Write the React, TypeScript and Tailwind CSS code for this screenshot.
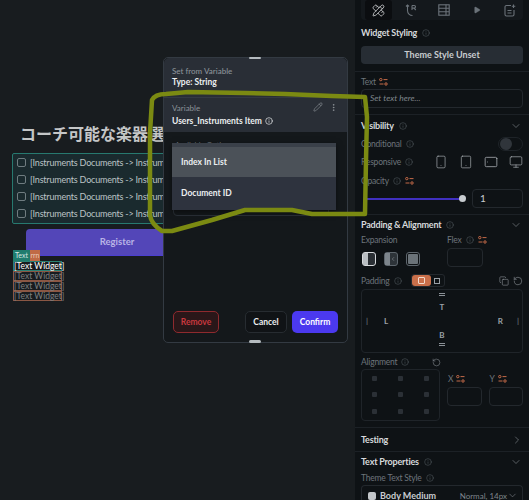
import { ChevronDown, ChevronLeft, ChevronRight, Copy, EllipsisVertical, Info, Monitor, PencilRuler, Pencil, Play, RotateCcw, Smartphone, Tablet } from "lucide-react";

const font = { fontFamily: "Lato, sans-serif" };

function VarIcon() {
  return (
    <svg width="9" height="8" viewBox="0 0 9 8" fill="none" stroke="#c46a48" strokeWidth="1" className="shrink-0">
      <circle cx="1.8" cy="1.6" r="1.2" />
      <path d="M4.5 1.6h4" />
      <path d="M0.5 6h4" />
      <circle cx="7" cy="6" r="1.2" />
    </svg>
  );
}

function LogicIcon() {
  return (
    <svg width="13" height="13" viewBox="0 0 13 13" fill="none" stroke="currentColor" strokeWidth="1.1">
      <path d="M1 2.5l1.5-1.5 1.5 1.5" />
      <path d="M2.5 1v5.5a5 5 0 0 0 5 5" />
      <path d="M7 1.5v4.5M7 1.5h2.2a1.3 1.3 0 0 1 0 2.6H7M9 4.2l1.8 1.8" />
    </svg>
  );
}

function TableIcon() {
  return (
    <svg width="12" height="12" viewBox="0 0 12 12" fill="none" stroke="currentColor" strokeWidth="1.1">
      <rect x="0.8" y="0.8" width="10.4" height="10.4" />
      <path d="M0.8 4.2h10.4M0.8 7.8h10.4M8 0.8v10.4" />
    </svg>
  );
}

function AddNoteIcon() {
  return (
    <svg width="12" height="13" viewBox="0 0 12 13" fill="none" stroke="currentColor" strokeWidth="1.1">
      <path d="M7 1.5H2.5a1.5 1.5 0 0 0-1.5 1.5v7.5A1.5 1.5 0 0 0 2.5 12h6a1.5 1.5 0 0 0 1.5-1.5V6" />
      <path d="M3.5 6.5h4M3.5 9h4" />
      <path d="M9.5 0.5v3.5M7.8 2.2h3.5" />
    </svg>
  );
}

function Tip() {
  return <Info size={8} strokeWidth={1.4} className="text-[#5f676e] shrink-0" />;
}

function Label({ children }: { children: React.ReactNode }) {
  return <div className="text-[8.5px] leading-[12px] tracking-[-0.2px] text-[#6d747b]">{children}</div>;
}

function Heading({ children }: { children: React.ReactNode }) {
  return <div className="text-[9px] leading-[12px] tracking-[-0.2px] font-bold text-[#d6d9dc]">{children}</div>;
}

function Divider() {
  return <div className="h-px bg-[#1c2126]" />;
}

function SectionHead({ title }: { title: string }) {
  return (
    <div className="flex items-center justify-between pr-[1px]">
      <div className="flex items-center gap-[5px]">
        <Heading>{title}</Heading>
        <Tip />
      </div>
      <ChevronDown size={12} strokeWidth={1.2} className="text-[#8a9096]" />
    </div>
  );
}

function CheckRow() {
  return (
    <div className="flex items-center h-[17px] gap-[4px]">
      <div className="w-[9px] h-[9px] ml-[4px] shrink-0 rounded-[2px] border border-[#6f7c80]" />
      <span className="text-[9px] tracking-[-0.2px] whitespace-nowrap text-[#bcc3c5]">[Instruments Documents -&gt; Instruments Name]</span>
    </div>
  );
}

function WidgetRow({ active }: { active?: boolean }) {
  return (
    <div className={active ? "h-[10px] border border-[#2a8073] text-[8.5px] leading-[8px] whitespace-nowrap text-white" : "h-[10px] border border-[#8a5744] text-[8.5px] leading-[8px] whitespace-nowrap text-[#7d8082]"}>
      [Text Widget]
    </div>
  );
}

function Canvas() {
  return (
    <div className="w-[355px] shrink-0 h-full bg-[#181c1f] pt-[123px] overflow-hidden">
      <div className="w-[172px] overflow-hidden pl-[20px] text-[16px] leading-[22px] font-semibold whitespace-nowrap text-[#c4c6c7]" style={{ fontFamily: "Lato, 'Noto Sans CJK JP', sans-serif" }}>
        コーチ可能な楽器選択
      </div>
      <div className="ml-[12px] mt-[8px] w-[160px] h-[71px] overflow-hidden rounded-[2px] border border-[#27796f] bg-[#1a2a2e]">
        <CheckRow />
        <CheckRow />
        <CheckRow />
        <CheckRow />
      </div>
      <div className="ml-[26px] mt-[5px] w-[182px] h-[27px] rounded-t-[4px] border-b border-[#4c3fd0] bg-[#5346b8] flex items-center justify-center text-[9.5px] font-bold text-[#b9b4e6]">
        Register
      </div>
      <div className="ml-[13px] -mt-[6px] relative flex h-[11px] w-[27px] text-[7px] leading-[11px]">
        <span className="w-[17px] bg-[#1f7c6e] text-center text-[#d5e6e2]">Text</span>
        <span className="w-[10px] bg-[#c06a45] text-center text-[#e9c8b8]">rrn</span>
      </div>
      <div className="ml-[13px] w-[49px]">
        <WidgetRow active />
        <WidgetRow />
        <WidgetRow />
        <WidgetRow />
      </div>
    </div>
  );
}

function Panel() {
  return (
    <div className="flex-1 h-full bg-[#0e1215] px-[6px] overflow-hidden">
      <div className="h-[20px] rounded-b-[4px] bg-[#14181c] flex items-center gap-[6px] pl-[4px] text-[#6b7279]">
        <div className="w-[27px] h-[20px] rounded-[3px] bg-[#0b0d10] flex items-center justify-center text-[#e4e6e8]">
          <PencilRuler size={13} strokeWidth={1.4} />
        </div>
        <div className="w-[27px] flex justify-center"><LogicIcon /></div>
        <div className="w-[27px] flex justify-center"><TableIcon /></div>
        <div className="w-[27px] flex justify-center"><Play size={8} fill="currentColor" strokeWidth={1} /></div>
        <div className="w-[27px] flex justify-center"><AddNoteIcon /></div>
      </div>

      <div className="mt-[7px] flex items-center gap-[5px]">
        <Heading>Widget Styling</Heading>
        <Tip />
      </div>
      <div className="mt-[7px] h-[18px] rounded-[4px] bg-[#272d34] flex items-center justify-center text-[9px] font-bold text-[#c9ccd0]">
        Theme Style Unset
      </div>
      <div className="mt-[7px] -mx-[6px]"><Divider /></div>

      <div className="mt-[4px] flex items-center gap-[3px]">
        <Label>Text</Label>
        <VarIcon />
      </div>
      <div className="mt-[1px] h-[19px] rounded-[4px] border border-[#23282d] pl-[8px] flex items-center text-[8.5px] italic text-[#7e858b]">
        Set text here...
      </div>
      <div className="mt-[6px] -mx-[6px]"><Divider /></div>

      <div className="mt-[5px]">
        <SectionHead title="Visibility" />
      </div>
      <div className="mt-[4px] flex items-center justify-between h-[15px]">
        <div className="flex items-center gap-[4px]">
          <Label>Conditional</Label>
          <Tip />
        </div>
        <div className="w-[25px] h-[14px] rounded-full border border-[#1e2328] flex items-center pl-[1px]">
          <div className="w-[12px] h-[12px] rounded-full bg-[#30353b]" />
        </div>
      </div>
      <div className="mt-[3px] flex items-center justify-between h-[15px]">
        <div className="flex items-center gap-[4px]">
          <Label>Responsive</Label>
          <Tip />
        </div>
        <div className="flex items-center gap-[11px] text-[#a5aaaf]">
          <Smartphone size={14} strokeWidth={1.2} />
          <Tablet size={14} strokeWidth={1.2} />
          <Tablet size={14} strokeWidth={1.4} className="rotate-90" />
          <Monitor size={14} strokeWidth={1.2} />
        </div>
      </div>
      <div className="mt-[6px] flex items-center gap-[4px]">
        <Label>Opacity</Label>
        <Tip />
        <VarIcon />
      </div>
      <div className="mt-[2px] flex items-center">
        <div className="relative ml-[5px] w-[97px] h-[2px] bg-[#4030c0]">
          <div className="absolute -left-[2px] -top-[1px] w-[3px] h-[4px] rounded-full bg-[#5f676e]" />
          <div className="absolute -right-[3px] -top-[3px] w-[7px] h-[7px] rounded-full bg-[#c8ccd0]" />
        </div>
        <div className="ml-[9px] flex-1 h-[19px] rounded-[4px] border border-[#23282d] pl-[7px] flex items-center text-[10px] text-[#c9ccd0]">1</div>
      </div>
      <div className="mt-[6px] -mx-[6px]"><Divider /></div>

      <div className="mt-[4px]">
        <SectionHead title="Padding & Alignment" />
      </div>
      <div className="mt-[3px] flex gap-[5px]">
        <div className="w-[81px]">
          <Label>Expansion</Label>
          <div className="mt-[6px] ml-[1px] flex gap-[8px]">
            <div className="w-[14px] h-[14px] rounded-[3px] border border-[#d6d9dc] bg-[#2a2f34] flex">
              <div className="w-[5px] bg-[#b9bec2]" />
            </div>
            <div className="w-[14px] h-[14px] rounded-[3px] border border-[#5e666d] bg-[#2d3338] flex items-center">
              <div className="w-[5px] h-full bg-[#7d858c]" />
              <ChevronLeft size={6} strokeWidth={2} className="text-[#9aa0a6]" />
            </div>
            <div className="w-[14px] h-[14px] rounded-[3px] border border-[#5e666d] p-[1px]">
              <div className="w-full h-full rounded-[1px] bg-[#6b7379]" />
            </div>
          </div>
        </div>
        <div>
          <div className="flex items-center gap-[4px]">
            <Label>Flex</Label>
            <Tip />
            <VarIcon />
          </div>
          <div className="mt-[2px] w-[36px] h-[19px] rounded-[4px] border border-[#23282d]" />
        </div>
      </div>

      <div className="mt-[7px] flex items-center justify-between">
        <div className="flex items-center gap-[4px]">
          <Label>Padding</Label>
          <Tip />
          <div className="ml-[5px] flex w-[34px] h-[13px] rounded-[3px] border border-[#23282d]">
            <div className="w-[19px] rounded-[3px] bg-[#c96f4a] flex items-center justify-center">
              <div className="w-[7px] h-[7px] rounded-[1px] border border-[#f2d9cc]" />
            </div>
            <div className="flex-1 flex items-center justify-center">
              <div className="w-[6px] h-[6px] border border-[#9aa0a6]" />
            </div>
          </div>
        </div>
        <div className="flex items-center gap-[4px] text-[#9aa0a6]">
          <Copy size={10} strokeWidth={1.3} />
          <RotateCcw size={10} strokeWidth={1.3} />
        </div>
      </div>
      <div className="mt-[2px] h-[64px] rounded-[4px] border border-[#1f2429] flex flex-col items-center text-[8px] font-bold text-[#9ca2a8]">
        <div className="mt-[3px] w-[6px] h-[3px] border-t border-b border-[#8a9096]" />
        <div className="mt-[6px] leading-[10px]">T</div>
        <div className="mt-[4px] w-full flex justify-between pl-[4px] pr-[3px] leading-[10px]">
          <div className="flex gap-[16px]"><span className="text-[#5f676e]">|</span><span>L</span></div>
          <div className="flex gap-[14px]"><span>R</span><span className="text-[#5f676e]">|</span></div>
        </div>
        <div className="mt-[4px] leading-[10px]">B</div>
        <div className="mt-[3px] w-[6px] h-[3px] border-t border-b border-[#8a9096]" />
      </div>

      <div className="mt-[3px] flex gap-[7px]">
        <div className="w-[79px] shrink-0">
          <div className="flex items-center justify-between">
            <div className="flex items-center gap-[4px]">
              <Label>Alignment</Label>
              <Tip />
            </div>
            <RotateCcw size={9} strokeWidth={1.3} className="text-[#9aa0a6] mr-[-1px]" />
          </div>
          <div className="mt-[1px] h-[52px] rounded-[4px] border border-[#1f2429] grid grid-cols-3 grid-rows-3 place-items-center">
            {Array.from({ length: 9 }).map((_, i) => (
              <div key={i} className="w-[5px] h-[5px] rounded-[1px] bg-[#2b3036]" />
            ))}
          </div>
        </div>
        <div className="flex-1 flex gap-[7px] pt-[17px]">
          <div className="flex-1">
            <div className="flex items-center gap-[3px] h-[11px] pl-[1px]"><Label>X</Label><VarIcon /></div>
            <div className="mt-[3px] h-[19px] rounded-[4px] border border-[#23282d]" />
          </div>
          <div className="flex-1">
            <div className="flex items-center gap-[3px] h-[11px] pl-[1px]"><Label>Y</Label><VarIcon /></div>
            <div className="mt-[3px] h-[19px] rounded-[4px] border border-[#23282d]" />
          </div>
        </div>
      </div>
      <div className="mt-[6px] -mx-[6px]"><Divider /></div>

      <div className="h-[23px] flex items-center justify-between">
        <Heading>Testing</Heading>
        <ChevronRight size={12} strokeWidth={1.2} className="text-[#8a9096]" />
      </div>
      <div className="-mx-[6px]"><Divider /></div>

      <div className="mt-[4px]">
        <SectionHead title="Text Properties" />
      </div>
      <div className="mt-[4px] flex items-center gap-[4px]">
        <Label>Theme Text Style</Label>
        <Tip />
      </div>
      <div className="mt-[1px] h-[20px] rounded-t-[4px] border-t border-x border-[#23282d] pl-[6px] pr-[4px] flex items-center">
        <div className="w-[8px] h-[8px] rounded-[2px] bg-[#c3c7ca]" />
        <span className="ml-[4px] text-[9px] font-bold text-[#c9ccd0]">Body Medium</span>
        <span className="ml-auto text-[8px] text-[#7e858b]">Normal, 14px</span>
        <ChevronDown size={11} strokeWidth={1.2} className="text-[#8a9096]" />
      </div>
    </div>
  );
}

function VariableDialog() {
  return (
    <div className="absolute left-[163px] top-[57px] w-[185px] h-[286px] rounded-[5px] border border-[#333a42] bg-[#14181b] flex flex-col">
      <div className="absolute left-[85px] -top-[1px] w-[12px] h-[2px] rounded-full bg-[#b5bbbf]" />
      <div className="absolute left-[85px] -bottom-[1px] w-[12px] h-[3px] rounded-full bg-[#b5bbbf]" />
      <div className="h-[39px] bg-[#292e36] rounded-t-[5px] pl-[8px] pt-[8px]">
        <div className="text-[8px] leading-[10px] font-medium text-[#8b9298]">Set from Variable</div>
        <div className="mt-[1px] text-[8.5px] leading-[11px] font-bold text-[#eceef0]">Type: String</div>
      </div>
      <div className="h-[35px] bg-[#292e36] border-t border-[#343a42] pl-[8px] pr-[9px] pt-[5px] relative">
        <div className="text-[8px] leading-[10px] text-[#8b9298]">Variable</div>
        <div className="mt-[2px] flex items-center gap-[3px] text-[8.5px] leading-[12px] font-bold text-[#eceef0]">
          Users_Instruments Item
          <Info size={8} strokeWidth={2} />
        </div>
        <div className="absolute right-[9px] top-[4px] flex items-center gap-[6px] text-[#a4aaaf]">
          <Pencil size={10} strokeWidth={1.2} />
          <EllipsisVertical size={9} strokeWidth={1.6} />
        </div>
      </div>
      <div className="relative mx-[9px] mt-[9px] h-[75px] rounded-[4px]">
        <div className="text-[7.5px] leading-[10px] pl-[2px] text-[#6d747b]">Available Options</div>
        <div className="absolute left-0 right-[9px] top-[20px] bottom-0 rounded-[4px] border border-[#2a3037]" />
        <div className="absolute -left-[1px] -right-[-2px] top-[2px] h-[67px] bg-[#2e333e] shadow-[0_2px_6px_rgba(0,0,0,0.5)]">
          <div className="h-[4px] bg-[#3a4049]" />
          <div className="h-[30px] bg-[#4b5158] pl-[9px] flex items-center text-[8.5px] font-bold text-[#eceef0]">Index In List</div>
          <div className="h-[33px] pl-[9px] flex items-center text-[8.5px] font-bold text-[#eceef0]">Document ID</div>
        </div>
      </div>
      <div className="mt-auto mb-[9px] mx-[9px] flex items-center">
        <div className="w-[46px] h-[22px] rounded-[5px] border border-[#8f2a2e] bg-[#2a1719] flex items-center justify-center text-[8.5px] font-bold text-[#c8383e]">Remove</div>
        <div className="ml-auto w-[42px] h-[22px] rounded-[5px] border border-[#272c31] bg-[#101316] flex items-center justify-center text-[8.5px] font-bold text-[#eceef0]">Cancel</div>
        <div className="ml-[5px] w-[46px] h-[22px] rounded-[5px] bg-[#4b39ef] flex items-center justify-center text-[8.5px] font-bold text-white">Confirm</div>
      </div>
    </div>
  );
}

function Scribble() {
  return (
    <svg className="absolute inset-0 pointer-events-none" width="529" height="500" fill="none">
      <path
        d="M152 100 Q155 94 166 94 L188 92 L245 93 L285 94 L332 96 L365 97 L367 117 L366 160 L365 214 L312 214 L292 210 L245 210 L212 220 L172 231 L162 231 Q151 224 150 215 L150 133 Z"
        stroke="#7b8a12"
        strokeWidth="4.5"
        strokeLinejoin="round"
      />
    </svg>
  );
}

export default function App() {
  return (
    <div className="relative w-[529px] h-[500px] overflow-hidden flex" style={font}>
      <Canvas />
      <Panel />
      <VariableDialog />
      <Scribble />
    </div>
  );
}
